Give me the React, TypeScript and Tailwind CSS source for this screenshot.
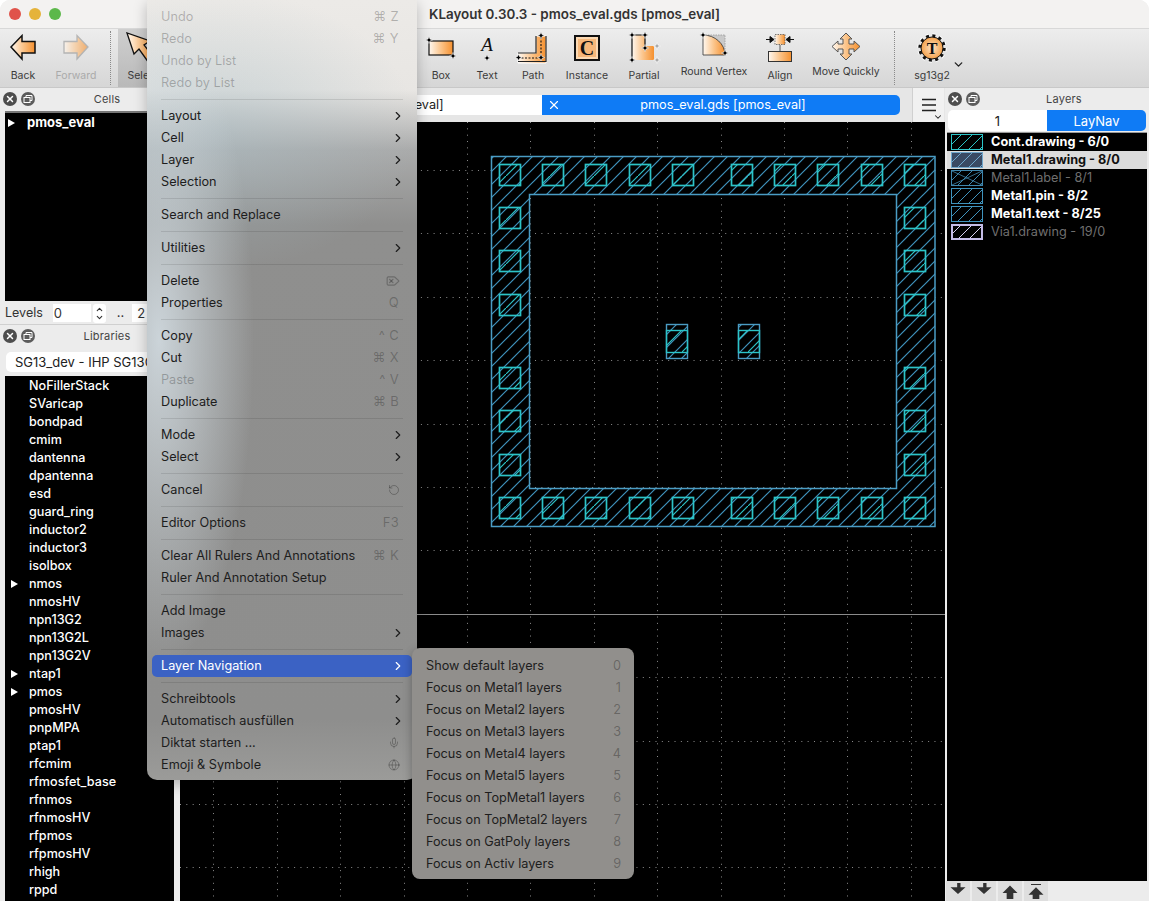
import type { ReactNode } from "react";
import { ChevronDown, ChevronRight, Delete, Globe, Mic, RotateCcw, X } from "lucide-react";

type MenuEntry =
  | { sep: true }
  | { label: string; disabled?: boolean; sub?: boolean; hot?: boolean; key?: string; icon?: ReactNode };

const menu: MenuEntry[] = [
  { label: "Undo", disabled: true, key: "⌘ Z" },
  { label: "Redo", disabled: true, key: "⌘ Y" },
  { label: "Undo by List", disabled: true },
  { label: "Redo by List", disabled: true },
  { sep: true },
  { label: "Layout", sub: true },
  { label: "Cell", sub: true },
  { label: "Layer", sub: true },
  { label: "Selection", sub: true },
  { sep: true },
  { label: "Search and Replace" },
  { sep: true },
  { label: "Utilities", sub: true },
  { sep: true },
  { label: "Delete", icon: <Delete size={14} className="-scale-x-100" /> },
  { label: "Properties", key: "Q" },
  { sep: true },
  { label: "Copy", key: "^ C" },
  { label: "Cut", key: "⌘ X" },
  { label: "Paste", disabled: true, key: "^ V" },
  { label: "Duplicate", key: "⌘ B" },
  { sep: true },
  { label: "Mode", sub: true },
  { label: "Select", sub: true },
  { sep: true },
  { label: "Cancel", icon: <RotateCcw size={12} /> },
  { sep: true },
  { label: "Editor Options", key: "F3" },
  { sep: true },
  { label: "Clear All Rulers And Annotations", key: "⌘ K" },
  { label: "Ruler And Annotation Setup" },
  { sep: true },
  { label: "Add Image" },
  { label: "Images", sub: true },
  { sep: true },
  { label: "Layer Navigation", sub: true, hot: true },
  { sep: true },
  { label: "Schreibtools", sub: true },
  { label: "Automatisch ausfüllen", sub: true },
  { label: "Diktat starten ...", icon: <Mic size={12} /> },
  { label: "Emoji & Symbole", icon: <Globe size={12} /> },
];

const layerNav = [
  "Show default layers",
  "Focus on Metal1 layers",
  "Focus on Metal2 layers",
  "Focus on Metal3 layers",
  "Focus on Metal4 layers",
  "Focus on Metal5 layers",
  "Focus on TopMetal1 layers",
  "Focus on TopMetal2 layers",
  "Focus on GatPoly layers",
  "Focus on Activ layers",
];

const libs = [
  "NoFillerStack", "SVaricap", "bondpad", "cmim", "dantenna", "dpantenna", "esd", "guard_ring",
  "inductor2", "inductor3", "isolbox", "nmos", "nmosHV", "npn13G2", "npn13G2L", "npn13G2V", "ntap1",
  "pmos", "pmosHV", "pnpMPA", "ptap1", "rfcmim", "rfmosfet_base", "rfnmos", "rfnmosHV", "rfpmos",
  "rfpmosHV", "rhigh", "rppd",
];
const expandable = ["nmos", "ntap1", "pmos"];

const layers = [
  { name: "Cont.drawing - 6/0", color: "#2cc4c8", on: true, fill: "#000" },
  { name: "Metal1.drawing - 8/0", color: "#6fa6cc", on: true, fill: "#3a4a64", picked: true },
  { name: "Metal1.label - 8/1", color: "#3f86ad", on: false, fill: "#000", cross: true },
  { name: "Metal1.pin - 8/2", color: "#3f93bd", on: true, fill: "#000" },
  { name: "Metal1.text - 8/25", color: "#3f93bd", on: true, fill: "#000" },
  { name: "Via1.drawing - 19/0", color: "#c4bce6", on: false, fill: "#000", thick: true },
];

// contact squares, page coordinates of the centres
const topX = [510, 553, 596, 640, 683, 742, 785, 828, 872, 915];
const sideY = [218, 261, 305, 378, 421, 465];

function Handle({ x, y, c = "#000" }: { x: number; y: number; c?: string }) {
  return (
    <path
      d={`M${x} ${y - 3.5}L${x + 1} ${y - 1}L${x + 3.5} ${y}L${x + 1} ${y + 1}L${x} ${y + 3.5}L${x - 1} ${y + 1}L${x - 3.5} ${y}L${x - 1} ${y - 1}Z`}
      fill={c}
      stroke="#fff"
      strokeWidth="0.6"
    />
  );
}

function Icon({ children, w = 36 }: { children: ReactNode; w?: number }) {
  return (
    <svg width={w} height="32" viewBox={`0 0 ${w} 32`} className="shrink-0">
      {children}
    </svg>
  );
}

function ToolButton({ label, width, icon, high, dim }: { label: string; width: string; icon: ReactNode; high?: boolean; dim?: boolean }) {
  return (
    <div className={`${width} h-full flex flex-col items-center pt-[3px] shrink-0`}>
      <div className="h-[32px] flex items-center">{icon}</div>
      <span className={`${high ? "mt-px" : "mt-[5px]"} text-[10.5px] leading-[14px] whitespace-nowrap ${dim ? "text-[#aaa]" : "text-[#3a3a3a]"}`}>
        {label}
      </span>
    </div>
  );
}

function DottedSep() {
  return <div className="w-px h-[54px] self-center border-l border-dotted border-[#8a8a8a] shrink-0" />;
}

function DockHeader({ title, titleClass }: { title: string; titleClass: string }) {
  return (
    <div className="h-[22px] flex items-center pl-[3px] relative shrink-0">
      <div className="w-[14px] h-[14px] rounded-full bg-[#4d4d4d] flex items-center justify-center">
        <X size={10} strokeWidth={3.5} className="text-white" />
      </div>
      <div className="w-[14px] h-[14px] rounded-full bg-[#5c5c5c] flex items-center justify-center ml-[4px]">
        <svg width="10" height="10" viewBox="0 0 10 10" fill="none" stroke="#fff" strokeWidth="1">
          <rect x="1" y="3.5" width="6" height="5" />
          <path d="M3 3.5V1.5H9V6.5H7" />
        </svg>
      </div>
      <span className={`${titleClass} text-[11px] text-[#444] tracking-[0.2px] text-center`}>{title}</span>
    </div>
  );
}

function Swatch({ color, fill, cross, thick }: { color: string; fill: string; cross?: boolean; thick?: boolean }) {
  const offsets = [-16, -5, 6, 17, 28];
  return (
    <svg width="32" height="16" viewBox="0 0 32 16" className="shrink-0">
      <rect x="0" y="0" width="32" height="16" fill={fill} />
      {offsets.map((o) => (
        <line key={o} x1={o} y1="16" x2={o + 16} y2="0" stroke={thick ? "#d8d2f0" : color} strokeWidth="1" />
      ))}
      {cross && <path d="M1 1L31 15M1 15L31 1" stroke={color} strokeWidth="0.8" />}
      {thick ? (
        <rect x="1" y="1" width="30" height="14" fill="none" stroke={color} strokeWidth="2" />
      ) : (
        <rect x="0.5" y="0.5" width="31" height="15" fill="none" stroke={color} strokeWidth="1" />
      )}
    </svg>
  );
}

function Canvas() {
  const xs = Array.from({ length: 13 }, (_, i) => Math.round(213.4 + i * 63.4) + 0.5);
  const ys = Array.from({ length: 13 }, (_, i) => Math.round(170 + i * 63.4) + 0.5);
  const contacts: [number, number][] = [];
  topX.forEach((x) => {
    contacts.push([x, 175]);
    contacts.push([x, 508]);
  });
  sideY.forEach((y) => {
    contacts.push([510, y]);
    contacts.push([915, y]);
  });
  return (
    <svg viewBox="180 122 765 779" className="w-full h-full block bg-black">
      <defs>
        <pattern id="metal" width="13" height="13" patternUnits="userSpaceOnUse">
          <path d="M-1 14L14 -1" stroke="#3f93bd" strokeWidth="1.2" />
          <path d="M-1 1L1 -1M12 14L14 12" stroke="#3f93bd" strokeWidth="1.2" />
        </pattern>
        <pattern id="cont" width="22" height="22" patternUnits="userSpaceOnUse">
          <path d="M-1 23L23 -1" stroke="#2cc4c8" strokeWidth="1.2" />
        </pattern>
      </defs>
      {xs.map((x) => (
        <line key={x} x1={x} y1="122" x2={x} y2="901" stroke="#8c8c8c" strokeWidth="1" strokeDasharray="1 5.34" />
      ))}
      {ys.map((y) => (
        <line key={y} x1="180" y1={y} x2="945" y2={y} stroke="#8c8c8c" strokeWidth="1" strokeDasharray="1 5.34" />
      ))}
      <line x1="180" y1="614.5" x2="945" y2="614.5" stroke="#8b8b8b" strokeWidth="1" />
      <path d="M491.5 156.5H935V526.5H491.5ZM529.5 194.5V488.5H896.5V194.5Z" fill="#000" fillRule="evenodd" />
      <path d="M491.5 156.5H935V526.5H491.5ZM529.5 194.5V488.5H896.5V194.5Z" fill="url(#metal)" fillRule="evenodd" stroke="#4a9cc4" strokeWidth="1.5" />
      {contacts.map(([x, y]) => (
        <rect key={`${x}-${y}`} x={x - 10.5} y={y - 10.5} width="21" height="21" fill="url(#cont)" stroke="#2cc4c8" strokeWidth="1.7" />
      ))}
      {[666, 738].map((x) => (
        <g key={x}>
          <rect x={x + 0.5} y="324.5" width="21" height="34" fill="url(#metal)" stroke="#4a9cc4" strokeWidth="1.4" />
          <rect x={x + 0.5} y="330.5" width="21" height="22" fill="url(#cont)" stroke="#2cc4c8" strokeWidth="1.4" />
        </g>
      ))}
    </svg>
  );
}

function Toolbar() {
  return (
    <div className="h-[59px] flex bg-[linear-gradient(180deg,#ededed,#d6d6d6)] border-t border-[#d8d8d8] shrink-0">
      <ToolButton
        label="Back"
        width="w-[46px]"
        icon={
          <Icon>
            <path d="M6 15L17 3.5V9.5H30V21H17V27Z" fill="url(#orangeH)" stroke="#111" strokeWidth="1.5" />
          </Icon>
        }
      />
      <ToolButton
        label="Forward"
        width="w-[60px]"
        dim
        icon={
          <Icon>
            <path d="M30 15L19 3.5V9.5H6V21H19V27Z" fill="url(#orangeH)" stroke="#9a9a9a" strokeWidth="1.3" opacity="0.65" />
          </Icon>
        }
      />
      <div className="w-[4px]" />
      <DottedSep />
      <div className="w-[7px]" />
      <div className="w-[50px] h-full bg-[linear-gradient(180deg,#cfcfcf,#b9b9b9)]">
        <ToolButton
          label="Select"
          width="w-[50px]"
          icon={
            <Icon>
              <path d="M2 1L9 22L14 17L24 31L30 27L19 13L25 9Z" fill="url(#orangeH)" stroke="#111" strokeWidth="1.3" />
            </Icon>
          }
        />
      </div>
      <div className="w-[250px]" />
      <ToolButton
        label="Box"
        width="w-[46px]"
        icon={
          <Icon>
            <rect x="6" y="9" width="24" height="14" fill="url(#orangeH)" stroke="#111" strokeWidth="1.2" />
            <Handle x={6} y={8} />
            <Handle x={30} y={24} />
          </Icon>
        }
      />
      <ToolButton
        label="Text"
        width="w-[46px]"
        icon={
          <Icon>
            <text x="18" y="19" textAnchor="middle" fontFamily="'Liberation Serif', serif" fontStyle="italic" fontSize="19" fill="#111">
              A
            </text>
            <Handle x={18} y={26} />
          </Icon>
        }
      />
      <ToolButton
        label="Path"
        width="w-[46px]"
        icon={
          <Icon>
            <path d="M3 21H21V4H31V31H3Z" fill="url(#orangeH)" stroke="#fff" strokeWidth="1" />
            <path d="M3 21H21V4M31 4V29.5H3" fill="none" stroke="#222" strokeWidth="1.2" />
            <path d="M3 26H26V4" fill="none" stroke="#111" strokeWidth="1.1" strokeDasharray="2 1.5" />
            <Handle x={26} y={3.5} />
            <Handle x={26} y={25.5} />
            <Handle x={3.5} y={25.5} />
          </Icon>
        }
      />
      <ToolButton
        label="Instance"
        width="w-[62px]"
        icon={
          <div className="w-[26px] h-[26px] border-2 border-[#111] bg-[#fbd9b3] flex items-center justify-center p-[2px]">
            <span className="w-full h-full bg-[#f6b77a] flex items-center justify-center font-['Liberation_Serif',serif] font-bold text-[20px] leading-none text-[#111]">
              C
            </span>
          </div>
        }
      />
      <ToolButton
        label="Partial"
        width="w-[52px]"
        icon={
          <Icon>
            <path d="M6 3H19V14H28V28H6Z" fill="url(#orangeH)" />
            <path d="M6 3V28M6 3H19V14" fill="none" stroke="#111" strokeWidth="1.2" />
            <Handle x={6} y={3} />
            <Handle x={19} y={3} />
            <Handle x={19} y={16} />
            <Handle x={6} y={28} />
            <Handle x={31} y={14} c="#aaa" />
            <Handle x={31} y={28} c="#aaa" />
          </Icon>
        }
      />
      <ToolButton
        label="Round Vertex"
        width="w-[88px]"
        high
        icon={
          <Icon>
            <path d="M7 3H29V23" fill="#c9c9c9" stroke="#999" strokeWidth="0.8" strokeDasharray="1.5 1" />
            <path d="M7 3C19 3 29 12 29 23H7Z" fill="url(#orangeH)" stroke="#333" strokeWidth="0.8" />
            <Handle x={7} y={3} />
            <Handle x={29} y={21} />
          </Icon>
        }
      />
      <ToolButton
        label="Align"
        width="w-[44px]"
        icon={
          <Icon>
            <rect x="13" y="2.5" width="10" height="10" fill="url(#orangeH)" stroke="#555" strokeWidth="0.8" strokeDasharray="1.5 1" />
            <path d="M4 7.5H8M8 4.5L12 7.5L8 10.5ZM32 7.5H28M28 4.5L24 7.5L28 10.5Z" fill="#111" stroke="#111" strokeWidth="1" />
            <line x1="18" y1="13" x2="18" y2="19" stroke="#555" />
            <rect x="6.5" y="19.5" width="23" height="10" fill="url(#orangeH)" stroke="#333" strokeWidth="1" />
          </Icon>
        }
      />
      <ToolButton
        label="Move Quickly"
        width="w-[88px]"
        high
        icon={
          <Icon>
            <path d="M18 1L24 7H21V12H26V9L32 14.5L26 20V17H21V22H24L18 28L12 22H15V17H10V20L4 14.5L10 9V12H15V7H12Z" fill="url(#orangeH)" stroke="#555" strokeWidth="1" />
          </Icon>
        }
      />
      <div className="w-[4px]" />
      <DottedSep />
      <div className="w-[9px]" />
      <ToolButton
        label="sg13g2"
        width="w-[56px]"
        icon={
          <Icon>
            <circle cx="18" cy="16" r="12.5" fill="none" stroke="#fff" strokeWidth="4.4" strokeDasharray="3.4 3.15" />
            <circle cx="18" cy="16" r="12" fill="none" stroke="#111" strokeWidth="3.4" strokeDasharray="3 3.28" />
            <circle cx="18" cy="16" r="11" fill="url(#gearFill)" stroke="#111" strokeWidth="1" />
            <text x="18" y="21.5" textAnchor="middle" fontFamily="'Liberation Serif', serif" fontWeight="bold" fontSize="16" fill="#111">
              T
            </text>
          </Icon>
        }
      />
      <ChevronDown size={13} strokeWidth={2.5} className="text-[#222] mt-[29px] -ml-[8px]" />
    </div>
  );
}

function LeftPanel() {
  return (
    <div className="w-[180px] shrink-0 flex flex-col bg-[#ececec]">
      <DockHeader title="Cells" titleClass="ml-[57px] w-[30px]" />
      <div className="h-[190px] mt-[1px] ml-[5px] mr-[5px] bg-black border-t-2 border-[#777] shrink-0">
        <div className="flex items-center h-[18px] mt-[1px] pl-[3px]">
          <span className="w-0 h-0 border-y-[4px] border-y-transparent border-l-[7px] border-l-white" />
          <span className="ml-[12px] text-[13px] font-bold text-white">pmos_eval</span>
        </div>
      </div>
      <div className="h-[23px] flex items-center pl-[5px] pt-[1px] shrink-0 text-[13px] text-[#333]">
        <span className="text-[12.5px]">Levels</span>
        <div className="ml-[10px] w-[38px] h-[18px] bg-white pl-[1px] leading-[18px]">0</div>
        <div className="ml-[2px] w-[13px] h-[19px] bg-white rounded-[3px] flex flex-col items-center justify-center">
          <ChevronDown size={9} strokeWidth={3} className="rotate-180 -mb-[1px]" />
          <ChevronDown size={9} strokeWidth={3} />
        </div>
        <span className="ml-[11px]">..</span>
        <div className="ml-[8px] w-[38px] h-[18px] bg-white pl-[5px] leading-[18px]">2</div>
      </div>
      <div className="h-px bg-[#d0d0d0] shrink-0" />
      <DockHeader title="Libraries" titleClass="ml-[47px] w-[50px]" />
      <div className="h-[29px] flex items-center pl-[6px] pr-[2px] shrink-0">
        <div className="w-full h-[20px] bg-white rounded-[5px] pl-[9px] text-[13px] leading-[20px] text-[#222] whitespace-nowrap overflow-hidden">
          SG13_dev - IHP SG13G2 Devices
        </div>
      </div>
      <div className="flex-1 min-h-0 ml-[5px] mr-[6px] pt-px bg-black overflow-hidden">
        {libs.map((name) => (
          <div key={name} className="h-[18px] flex items-center relative pl-[24px] text-[12.6px] font-medium text-white">
            {expandable.includes(name) && (
              <span className="absolute left-[6px] top-[5px] w-0 h-0 border-y-[4px] border-y-transparent border-l-[7px] border-l-white" />
            )}
            {name}
          </div>
        ))}
      </div>
    </div>
  );
}

function TabRow() {
  return (
    <div className="h-[34px] shrink-0 flex bg-[#e6e6e6]">
      <div className="flex-1 flex items-center min-w-0 pr-[12px]">
        <div className="w-[362px] h-[20px] bg-white rounded-l-[5px] text-center text-[12.7px] leading-[20px] text-[#222]">
          pmos_eval.gds [pmos_eval]
        </div>
        <div className="flex-1 h-[20px] bg-[#0f7bf5] rounded-r-[5px] relative text-center text-[12.7px] leading-[20px] text-white pl-[4px]">
          <X size={14} className="absolute left-[5px] top-[3px]" />
          pmos_eval.gds [pmos_eval]
        </div>
      </div>
      <div className="w-[32px] h-full bg-[#f1f1f1] border-l border-[#d0d0d0] relative flex items-center justify-center mr-[1px]">
        <svg width="16" height="14" viewBox="0 0 16 14" stroke="#222" strokeWidth="1.6">
          <path d="M1 1.5H15M1 7H15M1 12.5H15" />
        </svg>
        <ChevronDown size={10} strokeWidth={2.5} className="absolute right-[1px] bottom-0 text-[#222]" />
      </div>
    </div>
  );
}

function RightPanel() {
  return (
    <div className="w-[204px] shrink-0 flex flex-col bg-[#ececec]">
      <DockHeader title="Layers" titleClass="ml-[59px] w-[50px]" />
      <div className="h-[21px] flex mx-[3px] shrink-0 text-[13px] leading-[23px] text-center">
        <div className="w-[99px] bg-white rounded-l-[5px] text-[#222]">1</div>
        <div className="w-[99px] bg-[#0f7bf5] rounded-r-[5px] text-white">LayNav</div>
      </div>
      <div className="flex-1 min-h-0 mt-[1px] mx-[2px] bg-black border-t border-[#999]">
        {layers.map((l) => (
          <div
            key={l.name}
            className={`h-[18px] flex items-center pl-[4px] gap-[8px] text-[12.7px] ${l.picked ? "bg-[#dcdcdc] text-[#111] font-bold" : l.on ? "text-white font-bold" : "text-[#6f6f6f]"}`}
          >
            <Swatch color={l.color} fill={l.fill} cross={l.cross} thick={l.thick} />
            {l.name}
          </div>
        ))}
      </div>
      <div className="h-[20px] flex gap-[2px] pl-[1px] shrink-0">
        {["M3 6H11V1H15V6H21L12 14Z", "M3 6H11V1H15V6H21L12 14Z", "M3 13H8V20H16V13H21L12 4Z", "M3 15H8V20H16V15H21L12 6ZM6 2H18V3.4H6Z"].map((d, i) => (
          <div key={i} className="w-[24px] h-[20px] bg-[#dedede] flex items-center justify-center">
            <svg width="20" height="18" viewBox="0 0 24 21" fill="#333">
              <path d={d} />
            </svg>
          </div>
        ))}
      </div>
    </div>
  );
}

function ContextMenu() {
  return (
    <div className="absolute left-[147px] top-0 w-[270px] h-[780px] pt-[6px] rounded-b-[10px] shadow-[0_4px_14px_rgba(0,0,0,0.25)] bg-[radial-gradient(ellipse_95px_330px_at_12px_340px,rgba(214,224,230,0.85),rgba(214,224,230,0)),radial-gradient(ellipse_200px_140px_at_70px_130px,rgba(170,190,198,0.5),rgba(170,190,198,0)),linear-gradient(180deg,#eceae7_0px,#e8e6e3_90px,#aaabab_150px,#8f8f8e_225px,#8e8e8d_720px,#9b9b99_780px)]">
      {menu.map((m, i) =>
        "sep" in m ? (
          <div key={i} className="h-[11px] flex items-center mx-[14px]">
            <div className="h-px w-full bg-black/10" />
          </div>
        ) : (
          <div
            key={i}
            className={`h-[22px] mx-[5px] pl-[9px] pr-[9px] flex items-center justify-between rounded-[5px] text-[12.7px] whitespace-nowrap ${m.hot ? "bg-[#3b62c4] text-white" : m.disabled ? "text-black/25" : "text-[#1d1d1d]"}`}
          >
            <span>{m.label}</span>
            {m.sub && <ChevronRight size={14} strokeWidth={2} className="-mr-[2px]" />}
            {m.key && <span className={`text-[13px] tracking-[0.3px] mr-[4px] ${m.disabled ? "" : "text-black/25"}`}>{m.key}</span>}
            {m.icon && <span className="text-black/25 mr-[3px]">{m.icon}</span>}
          </div>
        )
      )}
    </div>
  );
}

function LayerNavMenu() {
  return (
    <div className="absolute left-[412px] top-[648px] w-[222px] h-[231px] pt-[6px] rounded-[8px] bg-[#918f8c] shadow-[0_3px_10px_rgba(0,0,0,0.3)]">
      {layerNav.map((label, i) => (
        <div key={label} className="h-[22px] pl-[14px] pr-[13px] flex items-center justify-between text-[12.7px] text-[#1d1d1d] whitespace-nowrap translate-y-px">
          <span>{label}</span>
          <span className="text-black/30">{i}</span>
        </div>
      ))}
    </div>
  );
}

export default function App() {
  return (
    <div className="relative w-[1149px] h-[901px] overflow-hidden bg-white font-['Inter','Liberation_Sans',sans-serif]">
      <svg width="0" height="0" className="absolute">
        <defs>
          <linearGradient id="orangeH" x1="0" x2="1" y1="0" y2="0">
            <stop offset="0" stopColor="#fff8f0" />
            <stop offset="0.5" stopColor="#fbc48a" />
            <stop offset="1" stopColor="#f5902e" />
          </linearGradient>
          <radialGradient id="gearFill" cx="0.5" cy="0.5" r="0.55">
            <stop offset="0" stopColor="#fde3c6" />
            <stop offset="1" stopColor="#f39a3e" />
          </radialGradient>
        </defs>
      </svg>

      <div className="w-full h-full flex flex-col rounded-t-[10px] overflow-hidden bg-[#ececec]">
        {/* title bar */}
        <div className="h-[28px] shrink-0 relative flex items-center justify-center bg-[#f3f2f1]">
          <div className="absolute left-[9px] top-[8px] flex gap-[8px]">
            <span className="w-[12px] h-[12px] rounded-full bg-[#e0534a]" />
            <span className="w-[12px] h-[12px] rounded-full bg-[#e5b33a]" />
            <span className="w-[12px] h-[12px] rounded-full bg-[#5cb84a]" />
          </div>
          <span className="text-[13.4px] font-semibold text-[#333]">KLayout 0.30.3 - pmos_eval.gds [pmos_eval]</span>
        </div>
        <Toolbar />
        <div className="h-px bg-[#c8c8c8] shrink-0" />

        <div className="flex-1 min-h-0 flex">
          <LeftPanel />
          <div className="flex-1 min-w-0 flex flex-col">
            <TabRow />
            <div className="flex-1 min-h-0">
              <Canvas />
            </div>
          </div>
          <RightPanel />
        </div>
      </div>

      <ContextMenu />
      <LayerNavMenu />
    </div>
  );
}
